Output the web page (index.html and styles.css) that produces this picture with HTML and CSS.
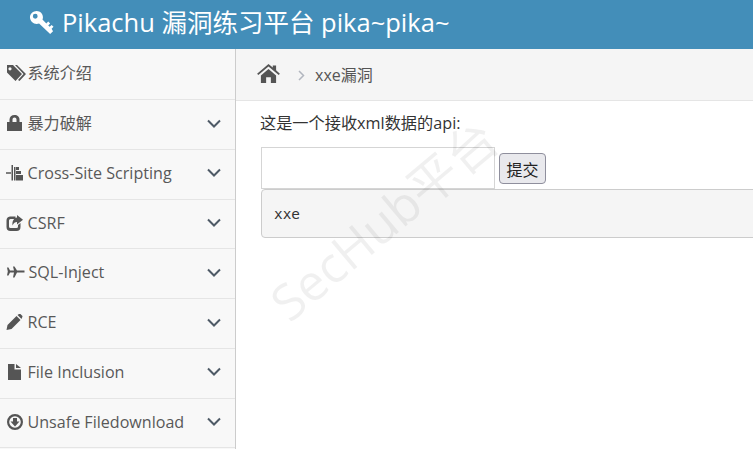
FILE: index.html
```html
<!DOCTYPE html>
<html lang="zh">
<head>
<meta charset="utf-8">
<title>Pikachu</title>
<link rel="stylesheet" href="styles.css">
</head>
<body>
<header class="navbar">
  <svg class="brand-icon" viewBox="0 0 26 26"><path fill-rule="evenodd" d="M8 1c3.600 0 6.500 2.900 6.500 6.500 0 .9-.2 1.700-.5 2.500L18 14l2-2 2 2-2 2 1.500 1.500 2-2 2 2-2 2L25 22l-3 3-11.500-11c-.8.300-1.600.500-2.500.500C4.400 14.500 1 11.100 1 7.500S4.400 1 8 1zM6.500 4a2.500 2.500 0 1 0 0 5 2.500 2.500 0 0 0 0-5z"/></svg>
  <span class="brand-text">Pikachu 漏洞练习平台 pika~pika~</span>
</header>
<div class="layout">
  <nav class="sidebar">
    <a class="item">
      <svg class="icon" viewBox="0 0 20 16"><path fill-rule="evenodd" d="M1 0H7L16 9 9.500 16 1 7.500zM4 2.200a1.600 1.600 0 1 0 0 3.200 1.600 1.600 0 0 0 0-3.200zM9 0h2L20 9 13.500 16 12 15 17.500 9z"/></svg>
      <span class="label">系统介绍</span>
    </a>
    <a class="item">
      <svg class="icon" viewBox="0 0 20 16"><path fill-rule="evenodd" d="M1 7h2.500V4.500C3.500 2 5.500 0 8.500 0s5 2 5 4.500V7H16v9H1zM6.500 7h4V4.500C10.500 3.200 9.600 2.500 8.500 2.500S6.500 3.200 6.500 4.500z"/></svg>
      <span class="label">暴力破解</span>
      <svg class="chevron" viewBox="0 0 14 9"><path d="M1 1.500 7 7.500 13 1.500"/></svg>
    </a>
    <a class="item">
      <svg class="icon" viewBox="0 0 20 16"><path d="M0 7.300h5v1.400H0zM5.500 0H7v15.500h-1.500zM8 2h1.500v13.500H8zM10 2h3v3h-3zM10 6h5v3h-5zM10 10h7v5.500h-7z"/></svg>
      <span class="label">Cross-Site Scripting</span>
      <svg class="chevron" viewBox="0 0 14 9"><path d="M1 1.500 7 7.500 13 1.500"/></svg>
    </a>
    <a class="item">
      <svg class="icon" viewBox="0 0 20 16"><path d="M4 1.500H9.500V4H4.500A1.500 1.500 0 0 0 3 5.500v6A1.500 1.500 0 0 0 4.500 13h6a1.500 1.500 0 0 0 1.500-1.500V10l2.500-2v4A4 4 0 0 1 10.500 16h-6A4 4 0 0 1 .5 12V5.500A4 4 0 0 1 4 1.500zM11 0l6 4.800L11 9.500V7C9 7 7.500 8 6.500 10.500 6 6 8 3 11 2.600z"/></svg>
      <span class="label">CSRF</span>
      <svg class="chevron" viewBox="0 0 14 9"><path d="M1 1.500 7 7.500 13 1.500"/></svg>
    </a>
    <a class="item">
      <svg class="icon" viewBox="0 0 20 16"><path d="M1 3.500H2.500L4 6.500H8L7 2.500H8.500L11 6.500H18.500V8.500H11L8.500 13.500H7L8 8.500H4L2.500 11.500H1L1.800 7.500z"/></svg>
      <span class="label label-wide">SQL-Inject</span>
      <svg class="chevron" viewBox="0 0 14 9"><path d="M1 1.500 7 7.500 13 1.500"/></svg>
    </a>
    <a class="item">
      <svg class="icon" viewBox="0 0 20 16"><path d="M.5 16 1.500 11 10.500 2 14.500 6 5.500 15zM11.500 1 13 0c.5-.4 1-.3 1.400 0l1.800 1.800c.4.400.4 1 0 1.400L15.500 5z"/></svg>
      <span class="label">RCE</span>
      <svg class="chevron" viewBox="0 0 14 9"><path d="M1 1.500 7 7.500 13 1.500"/></svg>
    </a>
    <a class="item">
      <svg class="icon" viewBox="0 0 20 16"><path d="M2 0h6.500v5.500H15V16H2zM10 0l5 4h-5z"/></svg>
      <span class="label">File Inclusion</span>
      <svg class="chevron" viewBox="0 0 14 9"><path d="M1 1.500 7 7.500 13 1.500"/></svg>
    </a>
    <a class="item">
      <svg class="icon" viewBox="0 0 20 16"><path fill-rule="evenodd" d="M9 0a8 8 0 1 1 0 16A8 8 0 0 1 9 0zM9 2.200a5.800 5.800 0 1 0 0 11.600A5.800 5.800 0 0 0 9 2.200zM7 4h4v3.500h2.500L9 12.500 4.500 7.500H7z"/></svg>
      <span class="label">Unsafe Filedownload</span>
      <svg class="chevron" viewBox="0 0 14 9"><path d="M1 1.500 7 7.500 13 1.500"/></svg>
    </a>
  </nav>
  <main class="main">
    <div class="breadcrumbs">
      <svg class="home" viewBox="0 0 24 20"><path d="M12 0 16.500 3.800V1.500H20V6.700L24 10.200 22.700 11.700 12 2.700 1.300 11.700 0 10.200zM4 12 12 5.200 20 12V20H14.500V14H9.500V20H4z"/></svg>
      <svg class="crumb-sep" viewBox="0 0 7 11"><path d="M1 1 5.500 5.500 1 10"/></svg>
      <span class="crumb">xxe漏洞</span>
    </div>
    <div class="content">
      <p class="intro">这是一个接收xml数据的api:</p>
      <form class="form">
        <input class="field" type="text">
        <button class="submit" type="button">提交</button>
      </form>
      <pre class="output">xxe</pre>
    </div>
    <div class="watermark">SecHub平台</div>
  </main>
</div>
</body>
</html>
```
FILE: styles.css
```css
* { box-sizing: border-box; }
html, body { margin: 0; padding: 0; height: 100%; overflow: hidden; }
body {
  font-family: "Open Sans", "Noto Sans CJK SC", sans-serif;
  font-size: 16px;
  color: #393939;
  background: #fff;
}
.navbar {
  height: 49px;
  background: #438eb9;
  color: #fff;
  display: flex;
  align-items: center;
  padding: 0 0 5px 29px;
}
.brand-icon { width: 25px; height: 25px; fill: #fff; margin-right: 8px; }
.brand-text { font-size: 25.5px; line-height: 34px; white-space: nowrap; }
.layout { display: flex; height: 400px; }
.sidebar {
  width: 236px;
  flex: none;
  background: #f8f8f8;
  border-right: 1px solid #ccc;
  padding-top: 1.4px;
}
.item {
  display: flex;
  align-items: center;
  height: 49.75px;
  padding: 0 14px 3px 6px;
  border-bottom: 1px solid #e5e5e5;
  color: #585858;
}
.icon { width: 20px; height: 16px; flex: none; fill: #555; margin-right: 1.5px; }
.label { font-size: 16.1px; line-height: 22px; white-space: nowrap; flex: 1; }
.label-wide { margin-left: 1px; }
.chevron { width: 14px; height: 9px; flex: none; fill: none; stroke: #4e5a66; stroke-width: 2; }
.main { flex: 1; position: relative; overflow: hidden; }
.breadcrumbs {
  height: 52px;
  background: #f5f5f5;
  border-bottom: 1px solid #e5e5e5;
  display: flex;
  align-items: center;
  padding-left: 21px;
}
.home { width: 23px; height: 19px; fill: #555; margin-top: -2px; }
.crumb-sep { width: 7px; height: 11px; fill: none; stroke: #b2b6bf; stroke-width: 1.500; margin-left: 18px; margin-top: 2px; }
.crumb { font-size: 16px; color: #555; margin-left: 10px; margin-top: -2px; }
.content { padding: 0 0 0 25px; }
.intro { margin: 11px 0 13px -1px; font-size: 16.2px; line-height: 22px; color: #333; }
.form { display: flex; align-items: flex-end; }
.field {
  width: 234px;
  height: 42px;
  margin: 0;
  border: 1px solid #d5d5d5;
  background: #fff;
}
.submit {
  width: 47px;
  height: 31px;
  margin: 0 0 5px 4px;
  padding: 0;
  border: 1px solid #8f8f9d;
  border-radius: 4px;
  background: #e9e9ed;
  font-family: "Noto Sans CJK SC", sans-serif;
  font-size: 16px;
  color: #222;
}
.output {
  margin: 0;
  width: 600px;
  height: 49px;
  padding: 15px 12px;
  background: #f5f5f5;
  border: 1px solid #ccc;
  border-radius: 4px;
  font-family: "DejaVu Sans Mono", monospace;
  font-size: 14.4px;
  line-height: 18px;
  color: #333;
}
.watermark {
  position: absolute;
  left: 9px;
  top: 143px;
  font-size: 50px;
  line-height: 56px;
  color: rgba(0, 0, 0, 0.06);
  transform: rotate(-40deg);
  white-space: nowrap;
  pointer-events: none;
}
```
